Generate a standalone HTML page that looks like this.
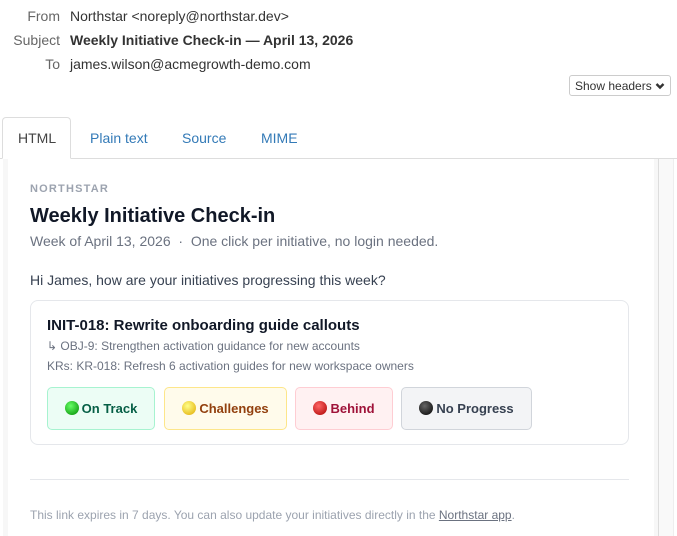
<!DOCTYPE html>
<html><head><style>
body{margin:0;width:677px;height:536px;overflow:hidden;background:#fff;font-family:"Liberation Sans",Arial,sans-serif;color:#333;position:relative}
.h{position:absolute;font-size:14px}
.lab{right:617px;color:#666;text-align:right}
.val{left:70px}
.btn{position:absolute;left:569px;top:75px;width:102px;height:21px;border:1px solid #ccc;border-radius:3px;font-size:12px;line-height:21px;box-sizing:border-box;padding-left:5px;color:#333}
.tabs{position:absolute;top:158px;left:0;width:677px;border-top:1px solid #ddd}
.tab{position:absolute;top:117px;font-size:14px;color:#337ab7}
.act{position:absolute;left:2px;top:117px;width:69px;height:42px;border:1px solid #ddd;border-bottom:1px solid #fff;border-radius:4px 4px 0 0;background:#fff;box-sizing:border-box}
.lstrip{position:absolute;left:3px;top:159px;width:5px;height:377px;background:#f7f7f7}
.rstrip{position:absolute;left:654px;top:159px;width:4px;height:377px;background:#f7f7f7}
.rbar{position:absolute;left:658px;top:159px;width:14px;height:377px;background:#f9f9f9;border-left:1px solid #ddd;border-right:1px solid #eee}
.c{position:absolute;left:30px}
.card{position:absolute;left:30px;top:300px;width:599px;height:145px;border:1px solid #e5e7eb;border-radius:8px;box-sizing:border-box}
.b{position:absolute;top:387px;height:43px;border-radius:5px;box-sizing:border-box;font-size:13px;font-weight:bold;line-height:41px;text-align:center}
.dot{display:inline-block;width:14px;height:14px;border-radius:50%;vertical-align:-2px;margin-right:3px}
</style></head><body>
<div class="h lab" style="top:8px">From</div><div class="h val" style="top:8px">Northstar &lt;noreply@northstar.dev&gt;</div>
<div class="h lab" style="top:32px">Subject</div><div class="h val" style="top:32px;font-weight:bold">Weekly Initiative Check-in — April 13, 2026</div>
<div class="h lab" style="top:56px">To</div><div class="h val" style="top:56px">james.wilson@acmegrowth-demo.com</div>
<div class="btn">Show headers <svg width="10" height="8" viewBox="0 0 10 8" style="vertical-align:0"><path d="M1.5 2 L5 5.5 L8.5 2" stroke="#333" stroke-width="2.4" fill="none"/></svg></div>
<div class="tabs"></div>
<div class="act"></div>
<div class="tab" style="left:18px;top:130px;color:#444">HTML</div>
<div class="tab" style="left:90px;top:130px">Plain text</div>
<div class="tab" style="left:182px;top:130px">Source</div>
<div class="tab" style="left:261px;top:130px">MIME</div>
<div class="lstrip"></div><div class="rstrip"></div><div class="rbar"></div>
<div class="c" style="top:183px;font-size:11px;font-weight:bold;letter-spacing:1.2px;color:#9ca3af">NORTHSTAR</div>
<div class="c" style="top:205px;font-size:20px;font-weight:bold;color:#111827">Weekly Initiative Check-in</div>
<div class="c" style="top:233px;font-size:14px;color:#6b7280">Week of April 13, 2026 &nbsp;·&nbsp; One click per initiative, no login needed.</div>
<div class="c" style="top:272px;font-size:14px;color:#374151">Hi James, how are your initiatives progressing this week?</div>
<div class="card"></div>
<div class="c" style="left:47px;top:317px;font-size:15px;font-weight:bold;color:#111827">INIT-018: Rewrite onboarding guide callouts</div>
<div class="c" style="left:47px;top:339px;font-size:12px;color:#6b7280">↳ OBJ-9: Strengthen activation guidance for new accounts</div>
<div class="c" style="left:47px;top:359px;font-size:12px;color:#6b7280">KRs: KR-018: Refresh 6 activation guides for new workspace owners</div>
<div class="b" style="left:47px;width:108px;background:#ecfdf5;border:1px solid #a7f3d0;color:#065f46"><span class="dot" style="background:radial-gradient(circle at 40% 35%,#6f6,#080)"></span>On Track</div>
<div class="b" style="left:164px;width:123px;background:#fffbeb;border:1px solid #fde68a;color:#92400e"><span class="dot" style="background:radial-gradient(circle at 40% 35%,#ff8,#e0a800)"></span>Challenges</div>
<div class="b" style="left:295px;width:98px;background:#fff1f2;border:1px solid #fecdd3;color:#9f1239"><span class="dot" style="background:radial-gradient(circle at 40% 35%,#f66,#a00)"></span>Behind</div>
<div class="b" style="left:401px;width:131px;background:#f3f4f6;border:1px solid #d1d5db;color:#374151"><span class="dot" style="background:radial-gradient(circle at 40% 35%,#666,#000)"></span>No Progress</div>
<div style="position:absolute;left:30px;top:479px;width:599px;border-top:1px solid #e5e7eb"></div>
<div class="c" style="top:508px;font-size:12px;color:#9ca3af">This link expires in 7 days. You can also update your initiatives directly in the <u style="color:#6b7280">Northstar app</u>.</div>
</body></html>
